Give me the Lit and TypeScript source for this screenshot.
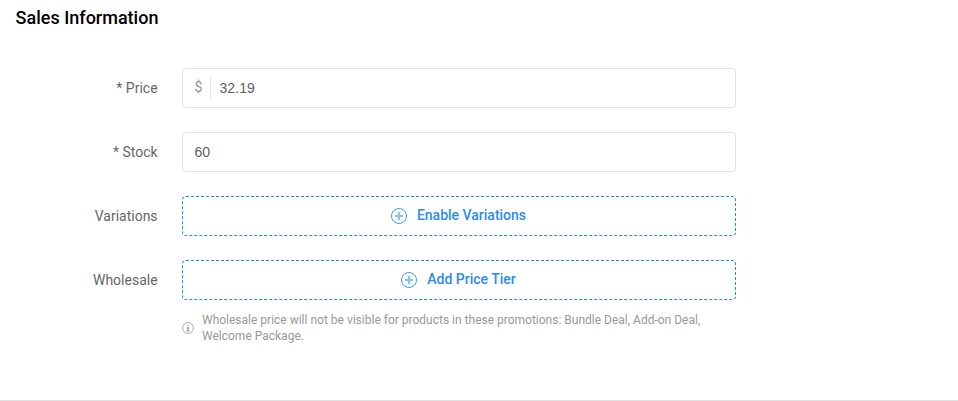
import { LitElement, html, css } from "lit";
import { customElement } from "lit/decorators.js";

const plus = html`<svg viewBox="0 0 16 16" width="16" height="16" fill="none"><circle cx="8" cy="8" r="7.5" stroke="#399ff6"/><path d="M8 4v8M4 8h8" stroke="#82c1fa" stroke-width="2"/></svg>`;

const info = html`<svg viewBox="0 0 12 12" width="12" height="12" fill="none"><circle cx="6" cy="6" r="5.45" stroke="#aaa"/><path d="M5 5.5h1.2V9M4.5 9h3M5.3 3.5h1.4" stroke="#999"/><path d="M6 5v4" stroke="#999" stroke-width="1.3"/></svg>`;

@customElement("app-root")
export class AppRoot extends LitElement {
  static styles = css`
    :host { display: block; height: 401px; box-sizing: border-box; background: #fff; font-family: Roboto, "Liberation Sans", sans-serif; font-size: 14px; color: #666; border-bottom: 1px solid #e2e2e2; overflow: hidden; }
    h2 { margin: 0; padding: 7px 0 0 15.6px; height: 61px; font-size: 18px; line-height: 22px; font-weight: 500; color: #000; }
    .row { display: grid; grid-template-columns: 157.6px 554px; column-gap: 24.4px; margin-bottom: 24px; }
    .label { text-align: right; line-height: 40px; }
    .field, .add { height: 40px; box-sizing: border-box; display: flex; align-items: center; border-radius: 4px; }
    .field { border: 1px solid #e4e4e4; padding: 0 11.4px; color: #606060; }
    .value { font-family: "Liberation Sans", sans-serif; letter-spacing: 0.08px; }
    .prefix { color: #999; width: 16.6px; box-sizing: border-box; margin-right: 8.5px; height: 24px; line-height: 22px; border-right: 1px solid #e8e8e8; }
    .add { border: 1px dashed #1791f2; justify-content: center; color: #2b8af0; font-weight: 500; gap: 10px; padding-right: 1px; }
    .add span { line-height: 18px; margin-bottom: 2px; }
    .note { display: flex; align-items: center; gap: 8px; margin-top: 12px; font-size: 12px; line-height: 16px; color: #999; }
  `;
  render() {
    return html`
      <h2>Sales Information</h2>
      <div class="row"><div class="label">* Price</div><div class="field"><span class="prefix">$</span><span class="value">32.19</span></div></div>
      <div class="row"><div class="label">* Stock</div><div class="field"><span class="value">60</span></div></div>
      <div class="row"><div class="label">Variations</div><div class="add">${plus}<span>Enable Variations</span></div></div>
      <div class="row"><div class="label">Wholesale</div><div><div class="add">${plus}<span>Add Price Tier</span></div>
        <div class="note">${info}<span>Wholesale price will not be visible for products in these promotions: Bundle Deal, Add-on Deal,<br>Welcome Package.</span></div></div></div>
    `;
  }
}
